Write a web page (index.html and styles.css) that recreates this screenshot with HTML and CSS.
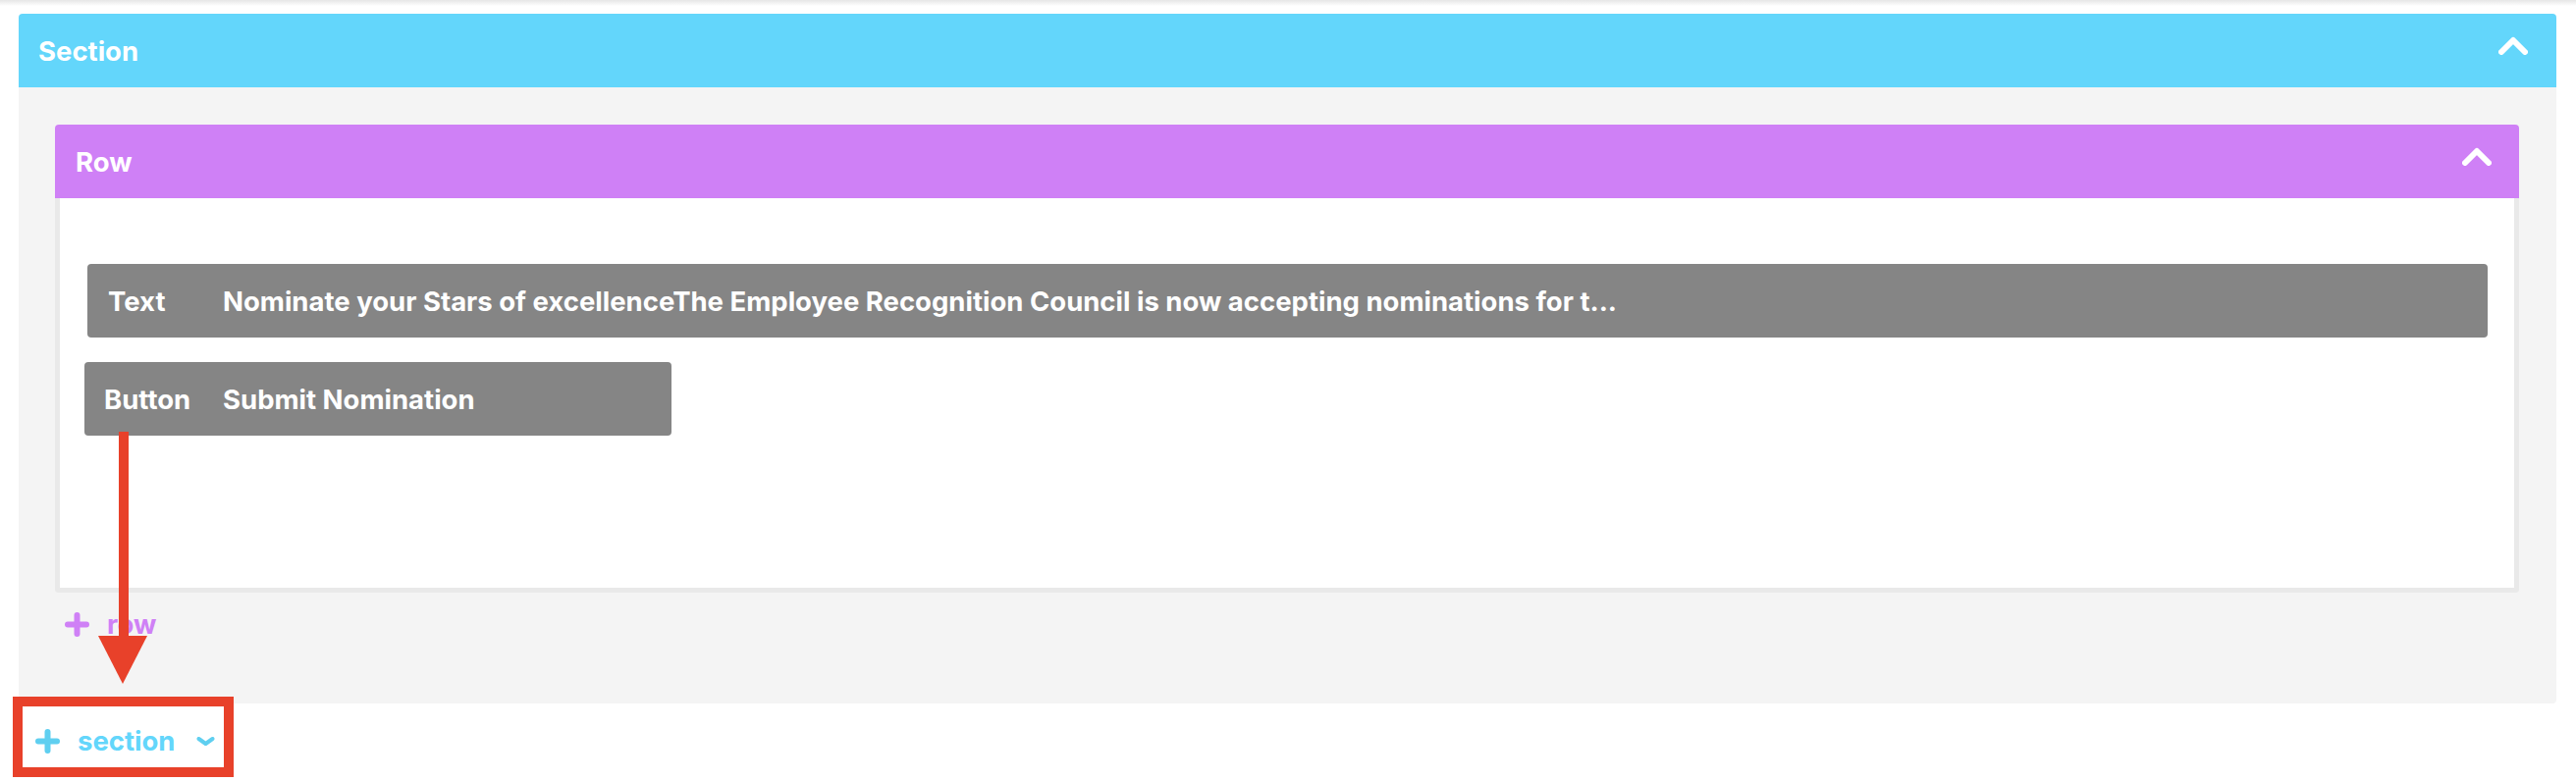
FILE: index.html
```html
<!DOCTYPE html>
<html lang="en">
<head>
  <meta charset="UTF-8">
  <meta name="viewport" content="width=device-width, initial-scale=1.0">
  <title>Page builder</title>
  <link rel="stylesheet" href="styles.css">
</head>
<body>

<div class="top-shade"></div>

<!-- Section -->
<div class="section">
  <div class="section-header">
    <span class="header-title">Section</span>
    <svg class="chevron-up" width="30" height="19" viewBox="0 0 30 19">
      <polyline points="3,16 15,4 27,16" />
    </svg>
  </div>

  <div class="section-body">
    <!-- Row -->
    <div class="row">
      <div class="row-header">
        <span class="header-title">Row</span>
        <svg class="chevron-up" width="30" height="19" viewBox="0 0 30 19">
          <polyline points="3,16 15,4 27,16" />
        </svg>
      </div>
      <div class="row-body">
        <div class="block block-text">
          <span class="block-label">Text</span>
          <span class="block-content">Nominate your Stars of excellenceThe Employee Recognition Council is now accepting nominations for t...</span>
        </div>
        <div class="block block-button">
          <span class="block-label">Button</span>
          <span class="block-content">Submit Nomination</span>
        </div>
      </div>
    </div>

    <div class="add add-row">
      <svg class="plus" width="25" height="25" viewBox="0 0 25 25">
        <line x1="12.5" y1="3" x2="12.5" y2="22" />
        <line x1="3" y1="12.5" x2="22" y2="12.5" />
      </svg>
      <span>row</span>
    </div>
  </div>
</div>

<div class="add add-section">
  <svg class="plus" width="25" height="25" viewBox="0 0 25 25">
    <line x1="12.5" y1="3" x2="12.5" y2="22" />
    <line x1="3" y1="12.5" x2="22" y2="12.5" />
  </svg>
  <span>section</span>
  <svg class="chevron-down" width="19" height="9" viewBox="0 0 19 9">
    <polyline points="2.5,2 9.5,7 16.5,2" />
  </svg>
</div>

<!-- Anotaciones en rojo -->
<svg class="note-arrow" width="50" height="257" viewBox="0 0 50 257">
  <rect x="21" y="0" width="10" height="212" />
  <polygon points="0,208 50,208 25,257" />
</svg>
<div class="note-box"></div>

</body>
</html>
```

FILE: styles.css
```css
body {
  margin: 0;
  background-color: #fff;
  font-family: Inter, Roboto, "Liberation Sans", Arial, sans-serif;
  font-weight: 700;
  font-size: 27.5px;
  color: #fff;
}

.top-shade {
  height: 6px;
  background: linear-gradient(#e6e6e6, #fff);
}

.section {
  margin: 8px 20px 0 19px;
}

.section-header,
.row-header {
  display: flex;
  align-items: center;
  justify-content: space-between;
  height: 75px;
  border-radius: 4px 4px 0 0;
}

.section-header {
  background-color: #63d6fb; /* cyan */
  padding: 0 29px 0 20px;
}

.row-header {
  background-color: #cf80f6; /* purple */
  padding: 0 28px 0 21px;
}

.chevron-up {
  margin-top: -11px;
}

.chevron-up polyline {
  fill: none;
  stroke: #fff;
  stroke-width: 6;
  stroke-linecap: round;
  stroke-linejoin: round;
}

.section-body {
  background-color: #f4f4f4;
  padding: 38px 38px 68px 37px;
  border-radius: 0 0 4px 4px;
}

.row-body {
  background-color: #fff;
  border: 5px solid #e9e9e9;
  border-top: none;
  border-radius: 0 0 4px 4px;
  padding: 67px 27px 155px 0;
}

.block {
  display: flex;
  align-items: center;
  height: 75px;
  background-color: #858585;
  border-radius: 4px;
  white-space: nowrap;
}

.block-text {
  margin-left: 28px;
}

.block-button {
  margin-left: 25px;
  margin-top: 25px;
  width: 598px;
}

.block-label {
  box-sizing: border-box;
  width: 138px;
  padding-left: 21px;
  flex-shrink: 0;
}

.block-button .block-label {
  width: 141px;
  padding-left: 20px;
}

/* Enlaces para agregar */
.add {
  display: flex;
  align-items: center;
  gap: 18px;
  height: 25px;
  line-height: 25px;
}

.plus line {
  stroke-width: 6;
  stroke-linecap: round;
}

.add-row {
  color: #cf80f6;
  margin-top: 20px;
  padding-left: 10px;
}

.add-row .plus line {
  stroke: #cf80f6;
}

.add-section {
  color: #63d6fb;
  margin-top: 26px;
  padding-left: 36px;
}

.add-section .plus line {
  stroke: #5fcff0;
}

.chevron-down {
  margin-left: 4px;
}

.chevron-down polyline {
  fill: none;
  stroke: #5fcff0;
  stroke-width: 4;
  stroke-linecap: round;
  stroke-linejoin: round;
}

.note-arrow {
  position: absolute;
  left: 100px;
  top: 440px;
}

.note-arrow rect,
.note-arrow polygon {
  fill: #e8412a;
}

.note-box {
  position: absolute;
  left: 13px;
  top: 710px;
  width: 205px;
  height: 62px;
  border: 10px solid #e8412a;
}
```
